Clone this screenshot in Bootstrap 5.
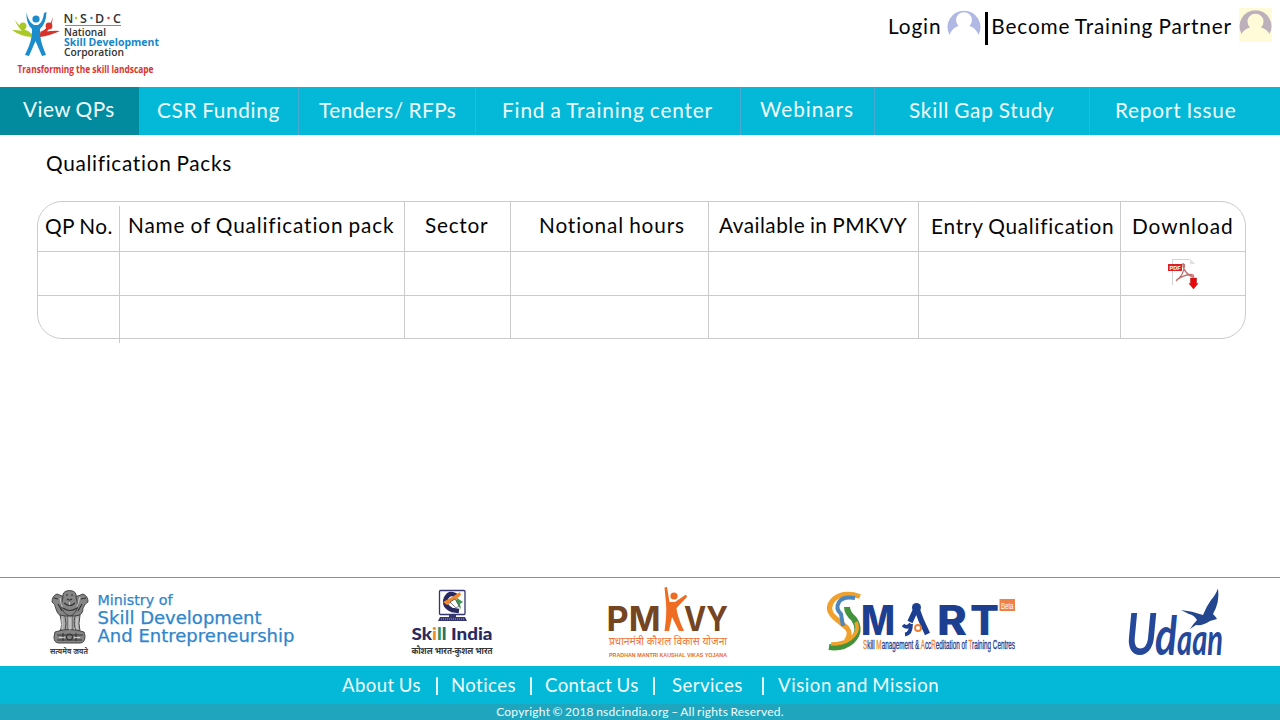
<!DOCTYPE html>
<html lang="en">
<head>
<meta charset="utf-8">
<meta name="viewport" content="width=device-width, initial-scale=1">
<title>NSDC - Qualification Packs</title>
<link href="https://cdn.jsdelivr.net/npm/bootstrap@5.3.0/dist/css/bootstrap.min.css" rel="stylesheet">
<style>
body{font-family:Lato,"Noto Sans",sans-serif;font-size:20.8px;line-height:26px;color:#050505;min-height:720px;background:#fff;letter-spacing:.74px;word-spacing:-1px}
svg{display:block;flex:none;letter-spacing:0;word-spacing:0}
.ls-5{letter-spacing:.47px}
.ls-8{letter-spacing:.84px}
.ls-10{letter-spacing:.95px}
.top{height:87px;padding:5px 8px 0 8px}
.account{height:36px;padding-top:3px}
.account a,.main-nav a,.foot-links a{color:inherit;text-decoration:none;white-space:nowrap}
.account a{margin-top:5px}
.bar{width:3px;height:33px;background:#000;margin:4px 3px 0 4px}
.main-nav{height:48px;background:#04b8d7;color:#f0fdff}
.main-nav a{border-right:1px solid #4aa9d3;padding-top:10px;height:48px;flex:none}
.main-nav a:last-child{border:0}
.main-nav .active{background:#028b9f;border-color:#3f9dbd}
.main-nav a:nth-child(1){width:140px;padding-left:23px;padding-top:9px}
.main-nav a:nth-child(2){width:159px;padding-left:17px;letter-spacing:.65px}
.main-nav a:nth-child(3){width:177px;padding-left:20px}
.main-nav a:nth-child(4){width:265px;padding-left:26px}
.main-nav a:nth-child(5){width:134px;padding-left:19px;padding-top:9px}
.main-nav a:nth-child(6){width:215px;padding-left:34px}
.main-nav a:nth-child(7){width:190px;padding-left:25px;letter-spacing:.77px}
h1{font-size:20.8px;line-height:26px;font-weight:400;margin:15px 0 25px 46px;letter-spacing:.68px}
.packs{width:1209px;margin-left:37px;border:1px solid #cbcbcb;border-radius:25px;position:relative}
.packs table{table-layout:fixed;border-collapse:separate;border-spacing:0;width:1207px}
.packs th{font-weight:400;height:50px;padding:10px 0 0;vertical-align:top;white-space:nowrap}
.packs th,.packs td{border-right:1px solid #cbcbcb;border-bottom:1px solid #cbcbcb}
.packs td{height:44px;padding:0}
.packs tr:last-child td{height:42px;border-bottom:0}
.packs tr>:last-child,.packs tr>:first-child{border-right:0}
.packs th:nth-child(1){padding:11px 0 0 7px}
.packs th:nth-child(2){padding-left:8px}
.packs th:nth-child(3){padding-left:20px}
.packs th:nth-child(4){padding-left:28px}
.packs th:nth-child(5){padding-left:10px}
.packs th:nth-child(6){padding:11px 0 0 12px}
.packs th:nth-child(7){padding:11px 0 0 11px}
.packs::after{content:"";position:absolute;left:81px;top:4px;width:1px;height:137px;background:#cbcbcb}
.pdf{margin-left:45px}
.partners{height:89px;border-top:1px solid #5d9cc0}
.foot-links{height:38px;background:#04b8d7;color:#f0fdff;font-size:18.6px;letter-spacing:.42px;display:grid;grid-template-columns:94px 15px 79px 15px 108px 19px 90px 16px 163px;padding-left:342px}
.foot-links a{padding-top:6px}
.foot-links a:last-child{letter-spacing:.56px}
.foot-links i{width:2px;height:18px;background:#e2fbff;margin-top:11px}
.copy{height:16px;background:#1fa5be;color:#f0fdff;font-size:12px;line-height:16px;white-space:nowrap;letter-spacing:.24px}
</style>
</head>
<body class="d-flex flex-column">
<header class="top d-flex justify-content-between">
  <svg width="160" height="76" viewBox="8 5 160 76" role="img" aria-label="NSDC">
    <path fill="#a8c928" d="M12 30Q24 30 33 34L31 37Q20 36 12 30M15 20Q21 29 30 32L28 36Q18 29 15 20"/>
    <path fill="#d8332b" d="M60 31Q48 30 38 34L40 37Q49 36 60 31M53 17Q50 28 40 32L42 36Q52 29 53 17"/>
    <circle cx="23" cy="26" r="3.500" fill="#a8c928"/><circle cx="49" cy="26" r="3.400" fill="#d8332b"/>
    <circle cx="36" cy="19" r="3.600" fill="#1b8ccc"/>
    <path fill="#1b8ccc" d="M26.500 12Q28 22 34 25H38Q43 22 44 13L46.500 12Q46 24 40 29Q39 39 46 55L42 56L35.500 41L29 56L25 55Q33 39 32 29Q26 24 26.500 12"/>
    <g font-family="'Open Sans',sans-serif" fill="#333">
      <g font-size="12.500" font-weight="600"><text x="63.500" y="23">N</text><text x="80" y="23">S</text><text x="95" y="23">D</text><text x="113" y="23">C</text></g>
      <path stroke="#888" d="M65 25.500H121"/>
      <text x="64" y="36" font-size="10.500" font-weight="600" textLength="42" lengthAdjust="spacingAndGlyphs">National</text>
      <text x="64" y="45.500" font-size="11" font-weight="700" fill="#1687ca" textLength="95" lengthAdjust="spacingAndGlyphs">Skill Development</text>
      <text x="64" y="55.500" font-size="10.500" font-weight="600" textLength="60" lengthAdjust="spacingAndGlyphs">Corporation</text>
      <text x="17.500" y="73" font-size="10" font-weight="700" fill="#d9332c" textLength="136" lengthAdjust="spacingAndGlyphs">Transforming the skill landscape</text>
    </g>
    <circle cx="76" cy="18" r="1.200" fill="#a8c928"/><circle cx="91.500" cy="18" r="1.200" fill="#1687ca"/><circle cx="108.500" cy="18" r="1.200" fill="#d8332b"/>
  </svg>
  <div class="account d-flex align-items-start">
    <a href="#" class="ls-8">Login</a>
    <svg style="margin-left:6px;margin-top:-2px" width="34" height="32" viewBox="0 0 34 32"><path fill="#b0b8e3" d="M2.500 29A16.500 16.500 0 1 1 31.500 29Q29 22 22.500 20A8 8 0 1 0 11.500 20Q5 22 2.500 29"/></svg>
    <span class="bar"></span>
    <a href="#" class="ls-8">Become Training Partner</a>
    <svg style="margin-left:7px" width="33" height="34" viewBox="0 0 33 34"><path fill="#fffbd9" d="M0 0H33V34H0z"/><path fill="#bdb0bb" d="M2.500 26A16 16 0 1 1 30.500 26Q28 21 22 19.500A8 8 0 1 0 11 19.500Q5 21 2.500 26"/></svg>
  </div>
</header>
<nav class="main-nav d-flex">
  <a href="#" class="active ls-5">View QPs</a><a href="#">CSR Funding</a><a href="#" class="ls-5">Tenders/ RFPs</a><a href="#" class="ls-8">Find a Training center</a><a href="#" class="ls-10">Webinars</a><a href="#">Skill Gap Study</a><a href="#">Report Issue</a>
</nav>
<main class="flex-grow-1">
  <h1>Qualification Packs</h1>
  <div class="packs">
    <table>
      <colgroup><col width="82"><col width="285"><col width="106"><col width="198"><col width="210"><col width="202"><col width="124"></colgroup>
      <thead><tr><th class="ls-5">QP No.</th><th class="ls-8">Name of Qualification pack</th><th>Sector</th><th class="ls-8">Notional hours</th><th class="ls-5">Available in PMKVY</th><th>Entry Qualification</th><th class="ls-10">Download</th></tr></thead>
      <tbody>
        <tr><td></td><td></td><td></td><td></td><td></td><td></td><td>
          <svg class="pdf" width="34" height="34" viewBox="1166 257 34 34" role="img" aria-label="Download PDF">
            <path fill="none" stroke="#cfd3d3" d="M1172.500 285V259.500H1189.500L1194.500 264"/><path fill="#dde2e2" d="M1190 259L1195 264H1190z"/>
            <path fill="none" stroke="#c0706c" stroke-width="1.300" d="M1176 281Q1184 275 1184.500 265Q1182 262 1183 266Q1185 274 1193 277Q1195 275 1191 274.500Q1183 275 1176.500 280"/>
            <rect x="1168" y="264" width="14" height="7" fill="#da2128"/>
            <text x="1169.500" y="269.500" font-family="Liberation Sans,sans-serif" font-size="5.500" font-weight="700" fill="#fff" textLength="11">PDF</text>
            <path fill="#e8090c" stroke="#a81416" stroke-width=".5" d="M1190.500 278H1196.500V283.500H1198L1193.500 289L1189 283.500H1190.500z"/>
          </svg></td></tr>
        <tr><td></td><td></td><td></td><td></td><td></td><td></td><td></td></tr>
      </tbody>
    </table>
  </div>
</main>
<footer>
  <div class="partners d-flex">
    <svg style="margin-left:40px" width="270" height="88" viewBox="40 578 270 88" role="img" aria-label="Ministry of Skill Development And Entrepreneurship">
      <g fill="#858585" stroke="#444" stroke-width="1">
        <path d="M57 594Q52 596 52 602Q55 603 56 609Q57 614 61 616H78Q83 614 83 608Q85 603 88 602Q88 596 83 594L78 596H62z"/>
        <path d="M63 597Q62 591 69.500 590.500Q77 591 76 597L78 606Q76 614 70 616Q63 614 61 606z"/>
        <path d="M60 615Q63 626 60 631H65Q67 624 65 616zM67 616V632H73V616zM75 616Q73 625 76 631H80Q78 624 80 615z" fill="#aaa"/>
        <path d="M55 632Q69 627 84 632L85 636Q85 643 80 643H59Q54 643 54 637z"/>
      </g>
      <g fill="none" stroke="#333" stroke-width="1.100">
        <path d="M66 595H68M71 595H73M67 599Q69.500 601 72 599M64 603Q70 608 75 603M63 608Q70 613 77 608M54 598L58 599M81 599L86 598M58 604L62 611M82 604L78 611M57 635H83M57 640H82M63 633V641M76 633V641"/><circle cx="69.500" cy="637" r="3"/>
      </g>
      <g stroke="#eee" stroke-width=".7"><path d="M60 598L62 607M80 597L77 607M69.500 602V605M62 618V629M70 618V630M77 618V629M59 637.500H65M74 637.500H80"/></g>
      <text x="50" y="654" font-size="8" font-weight="700" fill="#444" font-family="'Noto Sans',sans-serif" textLength="38" lengthAdjust="spacingAndGlyphs">सत्यमेव जयते</text>
      <g font-family="'DejaVu Sans',sans-serif" fill="#2f86cb" stroke="#2f86cb" stroke-width=".25">
        <text x="97.500" y="605" font-size="13.500" textLength="75" lengthAdjust="spacingAndGlyphs">Ministry of</text>
        <text x="97.500" y="624" font-size="16.800" textLength="164" lengthAdjust="spacingAndGlyphs">Skill Development</text>
        <text x="97.500" y="642" font-size="16.800" textLength="197" lengthAdjust="spacingAndGlyphs">And Entrepreneurship</text>
      </g>
    </svg>
    <svg style="margin-left:90px" width="110" height="88" viewBox="400 578 110 88" role="img" aria-label="Skill India">
      <rect x="439.500" y="590.500" width="25.500" height="24" rx="1" fill="#fff" stroke="#35356f" stroke-width="1.300"/>
      <path fill="none" stroke="#29295f" stroke-width="4.500" d="M457 596Q450 591 446 598Q443 606 452 610L459 611"/>
      <path fill="#f2882e" d="M443 602L452 597L460 592L461 595L453 602L447 605z"/><path fill="#3b9952" d="M457 598L463 602L460 604L461 609L455 603z"/><path fill="#fff" stroke="#333" stroke-width=".6" d="M450 602L455 599L459 606L456 608z"/>
      <path fill="#35356f" d="M449 614H456V617H465L467 621H438L440 617H449z"/><path stroke="#bbc" stroke-width=".8" stroke-dasharray="1 1" d="M441 619H464"/>
      <g font-family="Lato,sans-serif" font-weight="900" font-size="16" fill="#29295f">
        <text x="411.500" y="640" textLength="81" lengthAdjust="spacingAndGlyphs">Sk<tspan fill="#f08a2c">i</tspan><tspan fill="#35925a">l</tspan><tspan fill="#28705f">l</tspan> India</text>
      </g>
      <text x="411.500" y="653.500" font-size="8.800" font-weight="700" fill="#333" font-family="'Noto Sans',sans-serif" textLength="81" lengthAdjust="spacingAndGlyphs">कौशल भारत-कुशल भारत</text>
    </svg>
    <svg style="margin-left:90px" width="140" height="88" viewBox="600 578 140 88" role="img" aria-label="PMKVY">
      <g font-family="Inter,'Liberation Sans',sans-serif" font-weight="700" fill="#754522" font-size="33.500">
        <text x="606.500" y="631" textLength="54" lengthAdjust="spacingAndGlyphs">PM</text>
        <text x="684" y="631" textLength="44" lengthAdjust="spacingAndGlyphs">VY</text>
      </g>
      <circle cx="674" cy="596" r="3.600" fill="#ef6c23"/>
      <path fill="#ef6c23" d="M664.500 587.500L667 587L669.500 602H675L686 594.500L687 597L676.500 608Q677 616 684 631H679L672 617L669 631H664.500Q667 614 666 603z"/>
      <text x="609" y="645" font-size="10.500" fill="#ef7435" font-family="'Noto Sans',sans-serif" textLength="118" lengthAdjust="spacingAndGlyphs">प्रधानमंत्री कौशल विकास योजना</text>
      <text x="609" y="657" font-size="6" font-weight="700" fill="#e96b2b" font-family="'Liberation Sans',sans-serif" textLength="118" lengthAdjust="spacingAndGlyphs">PRADHAN MANTRI KAUSHAL VIKAS YOJANA</text>
    </svg>
    <svg style="margin-left:80px" width="200" height="88" viewBox="820 578 200 88" role="img" aria-label="SMART">
      <g fill="none">
        <path stroke="#f0a02d" stroke-width="5" d="M860 596.500Q844 591 834 599Q825 608 834 617Q841 623 847 628Q852 634 846 641"/>
        <path stroke="#4c86bb" stroke-width="4" d="M855 598Q843 596 839 602Q835 609 841 614L843 626"/>
        <path stroke="#43933c" stroke-width="6" d="M847 607Q847 613 854 619Q862 631 852 641Q843 649 829 647"/>
        <path stroke="#f0a12b" stroke-width="3.500" d="M856 622Q860 632 850 639Q843 644 831 644"/>
      </g>
      <g font-family="Inter,'Liberation Sans',sans-serif" font-weight="800" fill="#1d3f91" font-size="41">
        <text x="861" y="635" textLength="34" lengthAdjust="spacingAndGlyphs">M</text><text x="937" y="635" textLength="30" lengthAdjust="spacingAndGlyphs">R</text><text x="970" y="635" textLength="29" lengthAdjust="spacingAndGlyphs">T</text>
      </g>
      <path fill="none" stroke="#1d3f91" stroke-width="5.500" d="M916 609L910 622M917 609L921 620L927.500 634"/><circle cx="916.500" cy="607.500" r="4.500" fill="#1d3f91"/><circle cx="918" cy="628" r="3" fill="none" stroke="#ee7d2d" stroke-width="1.800"/>
      <path fill="none" stroke="#1d3f91" stroke-width="3.800" d="M903 625Q907 629 911 624M905 634.500Q911 634 911 624"/>
      <rect x="999.500" y="599" width="15.500" height="12" fill="#ef8048"/><text x="1001" y="608.500" font-size="9" fill="#fff" font-family="'Liberation Sans',sans-serif" textLength="12.500" lengthAdjust="spacingAndGlyphs">Beta</text>
      <text x="863" y="648.500" font-size="12.500" fill="#1d3f91" stroke="#1d3f91" stroke-width=".35" font-family="'Liberation Sans',sans-serif" textLength="152" lengthAdjust="spacingAndGlyphs"><tspan fill="#ee8a2d" stroke="#ee8a2d">S</tspan>kill <tspan fill="#ee8a2d" stroke="#ee8a2d">M</tspan>anagement &amp; <tspan fill="#ee8a2d" stroke="#ee8a2d">A</tspan>cc<tspan fill="#ee8a2d" stroke="#ee8a2d">R</tspan>editation of <tspan fill="#ee8a2d" stroke="#ee8a2d">T</tspan>raining Centres</text>
    </svg>
    <svg style="margin-left:100px" width="110" height="88" viewBox="1120 578 110 88" role="img" aria-label="Udaan">
      <g font-family="Lato,sans-serif" font-style="italic" font-weight="700" fill="#25489a">
        <text x="1126" y="654.500" font-size="58" textLength="31" lengthAdjust="spacingAndGlyphs">U</text>
        <text x="1155" y="654.500" font-size="54" textLength="22" lengthAdjust="spacingAndGlyphs">d</text>
        <text x="1177" y="654.500" font-size="44" textLength="46" lengthAdjust="spacingAndGlyphs">aan</text>
      </g>
      <path fill="#24468f" d="M1218 588.500Q1220 602 1213 614Q1216 617 1217 619L1210 621Q1203 626 1196 625L1190 629Q1193 624 1197 620Q1194 615 1189 614L1181 610Q1192 611 1203 615Q1206 607 1211 600Q1215 596 1218 588.500"/>
    </svg>
  </div>
  <div class="foot-links">
    <a href="#">About Us</a><i></i><a href="#">Notices</a><i></i><a href="#">Contact Us</a><i></i><a href="#">Services</a><i></i><a href="#">Vision and Mission</a>
  </div>
  <div class="copy text-center">Copyright © 2018 nsdcindia.org – All rights Reserved.</div>
</footer>
<script src="https://cdn.jsdelivr.net/npm/bootstrap@5.3.0/dist/js/bootstrap.bundle.min.js"></script>
</body>
</html>
